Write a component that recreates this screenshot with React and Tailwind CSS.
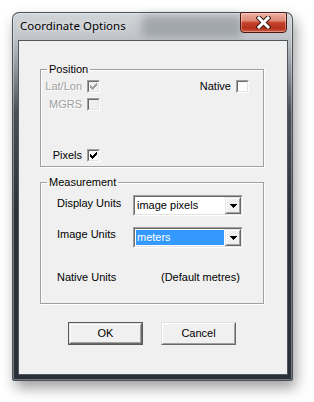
import React from "react";

function Sunken({ className, inner, children }) {
  return (
    <div className={"border-t border-l border-b border-r border-t-[#a0a0a0] border-l-[#a0a0a0] border-b-white border-r-white " + className}>
      <div className={"w-full h-full border-t border-l border-b border-r border-t-[#696969] border-l-[#696969] border-b-[#e3e3e3] border-r-[#e3e3e3] " + inner}>
        {children}
      </div>
    </div>
  );
}

function Raised({ className, children }) {
  return (
    <div className={"border-t border-l border-b border-r border-t-[#e3e3e3] border-l-[#e3e3e3] border-b-[#696969] border-r-[#696969] bg-[#f0f0f0] " + className}>
      <div className="w-full h-full border-t border-l border-b border-r border-t-white border-l-white border-b-[#a0a0a0] border-r-[#a0a0a0] flex items-center justify-center">
        {children}
      </div>
    </div>
  );
}

const CHECK = [
  [6],
  [5, 6],
  [0, 4, 5, 6],
  [0, 1, 3, 4, 5],
  [0, 1, 2, 3, 4],
  [1, 2, 3],
  [2],
];

function Check({ checked, disabled }) {
  return (
    <Sunken className="w-[13px] h-[13px] shrink-0" inner={disabled ? "bg-[#f0f0f0]" : "bg-white"}>
      {checked && (
        <svg width="9" height="9" viewBox="0 0 9 9" className="block" shapeRendering="crispEdges">
          <g fill={disabled ? "#a0a0a0" : "#000"}>
            {CHECK.map((row, y) =>
              row.map((x) => <rect key={y + "-" + x} x={x + 1} y={y + 1} width="1" height="1" />)
            )}
          </g>
        </svg>
      )}
    </Sunken>
  );
}

function Combo({ value, selected }) {
  return (
    <Sunken className="w-[110px] h-[21px] shrink-0" inner="bg-white flex items-stretch">
      <div className="flex-1 min-w-0 flex items-stretch">
        {selected ? (
          <div className="flex-1 m-[1px] bg-[#3399ff] text-white flex items-center pl-[1px] leading-[13px]">{value}</div>
        ) : (
          <div className="flex-1 m-[1px] flex items-center pl-[1px] leading-[13px]">{value}</div>
        )}
      </div>
      <Raised className="w-[16px] h-[17px] shrink-0">
        <svg width="7" height="4" viewBox="0 0 7 4" className="block" shapeRendering="crispEdges">
          <path d="M0 0H7V1H6V2H5V3H4V4H3V3H2V2H1V1H0Z" fill="#000" />
        </svg>
      </Raised>
    </Sunken>
  );
}

const disabledText = "text-[#a0a0a0] [text-shadow:1px_1px_0_#ffffff]";

export default function App() {
  return (
    <div className="w-[314px] h-[402px] bg-white overflow-hidden pt-[12px] pl-[12px]">
      <div className="w-[281px] h-[369px] flex flex-col rounded-t-[7px] rounded-b-[3px] bg-[linear-gradient(180deg,#d3d6d9_0px,#c0c4c8_26px,#9aa0a6_50px,#4a5058_100px,#2c323a_200px,#2a3038_100%)] shadow-[inset_0_0_0_1px_#4b5159,inset_0_0_0_2px_rgba(255,255,255,0.35),3px_7px_14px_rgba(0,0,0,0.38)]">
        <div className="relative h-[29px] shrink-0 flex items-start justify-between pl-[8px] pr-[6px]">
          <div aria-hidden="true" className="absolute left-[130px] top-[3px] w-[100px] h-[22px] rounded-[4px] bg-[#6a7078] opacity-40 blur-[4px]"></div>
          <div className="relative mt-[6px] text-[11.5px] leading-[16px] text-black font-['Noto_Sans',sans-serif] [text-shadow:0_0_6px_rgba(255,255,255,0.95)]">
            Coordinate Options
          </div>
          <div className="relative w-[47px] h-[21px] rounded-b-[4px] rounded-t-[2px] border border-[#4e1810] bg-[linear-gradient(180deg,#eeb1a3_0%,#dd8a76_40%,#c5412a_52%,#b5321d_80%,#d25a3f_100%)] shadow-[inset_0_0_0_1px_rgba(255,255,255,0.35)] flex items-center justify-center">
            <svg width="15" height="13" viewBox="0 0 15 13">
              <path d="M3 2 L12 11 M12 2 L3 11" stroke="#3b1a14" strokeWidth="5" strokeLinecap="square" />
              <path d="M3 2 L12 11 M12 2 L3 11" stroke="#ffffff" strokeWidth="3" strokeLinecap="square" />
            </svg>
          </div>
        </div>

        <div className="relative ml-[7px] mr-[6px] h-[333px] bg-[#f0f0f0] shadow-[0_0_0_1px_#50565e] flex flex-col text-[11px] text-black font-['Liberation_Sans',Arial,sans-serif]">
          <fieldset className="ml-[21px] mt-[21px] w-[224px] border border-[#a0a0a0] shadow-[inset_1px_1px_0_#ffffff,1px_1px_0_#ffffff] pt-[3px] pb-[4px]">
            <legend className="ml-[6px] px-[2px] leading-[15px]">Position</legend>
            <div className="flex items-center justify-between h-[13px] pr-[14px]">
              <div className="flex items-center">
                <div className={"w-[41px] text-right leading-[13px] " + disabledText}>Lat/Lon</div>
                <div className="ml-[5px]">
                  <Check checked disabled />
                </div>
              </div>
              <div className="flex items-center">
                <div className="leading-[13px] mr-[5px]">Native</div>
                <Check />
              </div>
            </div>
            <div className="flex items-center h-[13px] mt-[5px]">
              <div className={"w-[41px] text-right leading-[13px] " + disabledText}>MGRS</div>
              <div className="ml-[5px]">
                <Check disabled />
              </div>
            </div>
            <div className="flex items-center h-[13px] mt-[38px]">
              <div className="w-[41px] text-right leading-[13px]">Pixels</div>
              <div className="ml-[5px]">
                <Check checked />
              </div>
            </div>
          </fieldset>

          <fieldset className="ml-[21px] mt-[8px] w-[224px] border border-[#a0a0a0] shadow-[inset_1px_1px_0_#ffffff,1px_1px_0_#ffffff] pt-[5px] pb-[19px]">
            <legend className="ml-[6px] px-[2px] leading-[15px]">Measurement</legend>
            <div className="flex items-start">
              <div className="ml-[16px] w-[76px] mt-[2px] leading-[13px]">Display Units</div>
              <Combo value="image pixels" />
            </div>
            <div className="flex items-start mt-[11px]">
              <div className="ml-[16px] w-[76px] mt-[1px] leading-[13px]">Image Units</div>
              <Combo value="meters" selected />
            </div>
            <div className="flex items-start mt-[23px]">
              <div className="ml-[16px] w-[104px] leading-[13px]">Native Units</div>
              <div className="leading-[13px]">(Default metres)</div>
            </div>
          </fieldset>

          <div className="flex ml-[49px] mt-[18px] gap-[18px]">
            <div className="border border-[#5a5a5a]">
              <Raised className="w-[73px] h-[21px]">
                <span className="leading-[13px]">OK</span>
              </Raised>
            </div>
            <Raised className="w-[75px] h-[23px]">
              <span className="leading-[13px]">Cancel</span>
            </Raised>
          </div>
        </div>
      </div>
    </div>
  );
}
